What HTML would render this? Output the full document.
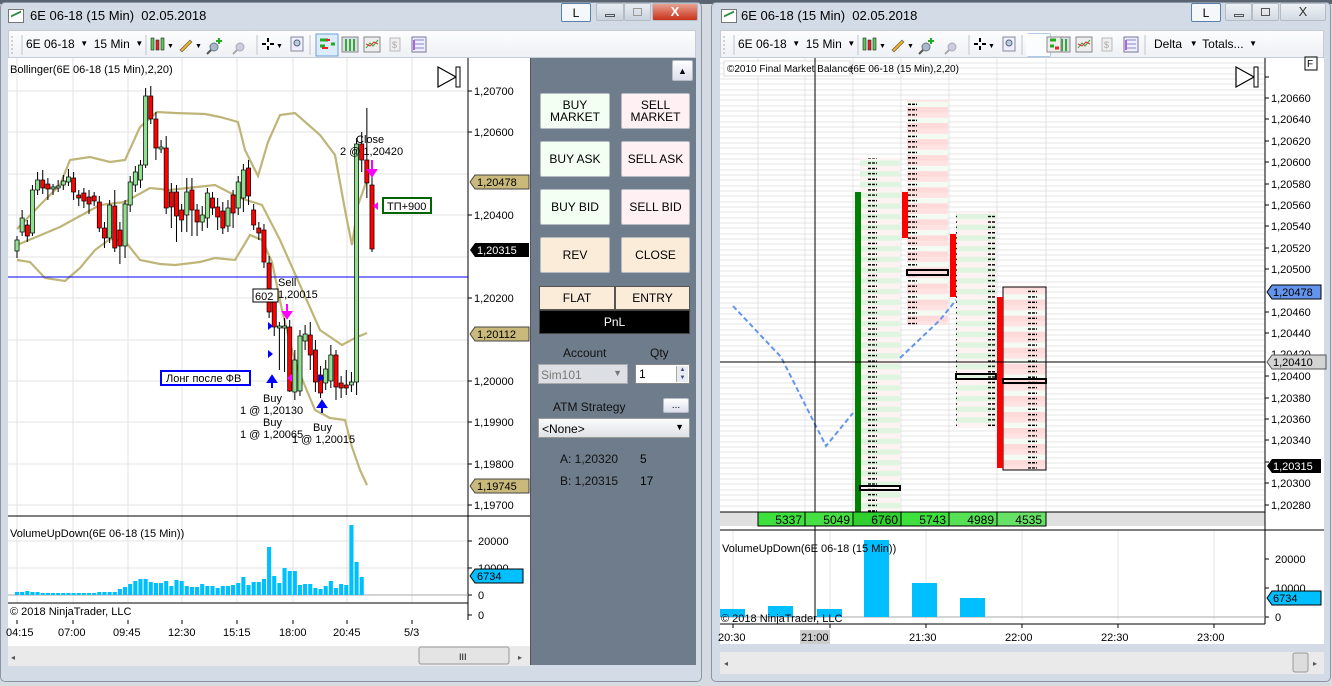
<!DOCTYPE html>
<html><head><meta charset="utf-8"><style>
*{margin:0;padding:0;box-sizing:border-box}
body{width:1332px;height:686px;overflow:hidden;background:#d6dbe2;font-family:"Liberation Sans",sans-serif;font-size:12px;position:relative}
.a{position:absolute}
.win{position:absolute;background:#d3dce6;border:1px solid #8a96a4;border-radius:5px}
.title{position:absolute;font-size:13px;color:#000}
.btn{position:absolute;border:1px solid #b6bcc4;border-radius:2px;text-align:center;font-size:12px;color:#000;display:flex;align-items:center;justify-content:center;line-height:12px}
.g{background:#f2fff2}.p{background:#fff0f3}.o{background:#fbebd9}
.lbl{font-size:11px;fill:#000}
.ar{font-size:8px;vertical-align:2px}
</style></head><body>
<div class="a" style="left:0;top:0;width:1332px;height:4px;background:#5a6470"></div>

<!-- LEFT WINDOW -->
<div class="win" style="left:0;top:2px;width:702px;height:680px"></div>
<div class="a" style="left:8px;top:9px;width:16px;height:14px;border:1px solid #777;background:#fff"><div style="margin:3px 2px;height:6px;border-top:2px solid #2a8a3a;transform:skewY(-25deg)"></div></div>
<div class="title" style="left:30px;top:8px">6E 06-18 (15 Min)&nbsp; 02.05.2018</div>
<div class="btn" style="left:561px;top:3px;width:30px;height:19px;background:#f5f8fb;border-color:#5a7fa8">L</div>
<div class="btn" style="left:596px;top:3px;width:28px;height:18px;background:linear-gradient(#e8edf3,#c9d3de)"><div style="width:10px;height:3px;border:1px solid #555;margin-top:6px"></div></div>
<div class="btn" style="left:624px;top:3px;width:27px;height:18px;background:linear-gradient(#e8edf3,#c9d3de)"><div style="width:9px;height:8px;border:1px solid #999"></div></div>
<div class="btn" style="left:652px;top:3px;width:46px;height:18px;background:linear-gradient(#e8a090,#c8311b);color:#fff;font-weight:bold;font-size:13px">X</div>
<div class="a" style="left:8px;top:30px;width:688px;height:28px;background:linear-gradient(#fdfdfe,#eef1f5);border:1px solid #c5ccd5"></div>
<div class="a" style="left:26px;top:37px;font-size:12px">6E 06-18 <span class="ar">&nbsp;▼&nbsp;</span> 15 Min <span class="ar">&nbsp;▼</span></div>

<div class="a" style="left:530px;top:58px;width:166px;height:607px;background:#6f7c8b;border-left:1px solid #555"></div>
<div class="btn" style="left:672px;top:60px;width:21px;height:21px;background:linear-gradient(#fff,#dde);font-size:9px">▲</div>
<div class="btn g" style="left:540px;top:93px;width:70px;height:36px">BUY<br>MARKET</div>
<div class="btn p" style="left:621px;top:93px;width:69px;height:36px">SELL<br>MARKET</div>
<div class="btn g" style="left:540px;top:141px;width:70px;height:36px">BUY ASK</div>
<div class="btn p" style="left:621px;top:141px;width:69px;height:36px">SELL ASK</div>
<div class="btn g" style="left:540px;top:189px;width:70px;height:36px">BUY BID</div>
<div class="btn p" style="left:621px;top:189px;width:69px;height:36px">SELL BID</div>
<div class="btn o" style="left:540px;top:237px;width:70px;height:36px">REV</div>
<div class="btn o" style="left:621px;top:237px;width:69px;height:36px">CLOSE</div>
<div class="btn o" style="left:539px;top:286px;width:76px;height:24px;border-color:#555;border-radius:0">FLAT</div>
<div class="btn o" style="left:615px;top:286px;width:75px;height:24px;border-color:#555;border-radius:0">ENTRY</div>
<div class="btn" style="left:539px;top:310px;width:151px;height:24px;background:#000;color:#fff;border-color:#444;border-radius:0">PnL</div>
<div class="a" style="left:563px;top:346px;color:#111">Account</div>
<div class="a" style="left:650px;top:346px;color:#111">Qty</div>
<div class="a" style="left:538px;top:364px;width:90px;height:20px;background:#dcdfe3;border:1px solid #aaa;color:#777;padding:3px 2px;font-size:12px">Sim101<span style="position:absolute;right:5px;top:3px;font-size:9px">▼</span></div>
<div class="a" style="left:635px;top:364px;width:55px;height:20px;background:#fff;border:1px solid #888;padding:2px 3px">1<div style="position:absolute;right:1px;top:1px;width:12px;height:16px;background:#e8ecf1;border-left:1px solid #aaa;font-size:6px;line-height:8px;text-align:center;color:#447">▲<br>▼</div></div>
<div class="a" style="left:553px;top:400px;color:#111">ATM Strategy</div>
<div class="btn" style="left:663px;top:398px;width:26px;height:15px;background:linear-gradient(#fff,#dde);font-size:10px">...</div>
<div class="a" style="left:538px;top:418px;width:152px;height:20px;background:linear-gradient(#fbfbfb,#dfe2e6);border:1px solid #999;padding:3px 3px">&lt;None&gt;<span style="position:absolute;right:5px;top:3px;font-size:9px">▼</span></div>
<div class="a" style="left:560px;top:452px;color:#111">A: 1,20320</div><div class="a" style="left:640px;top:452px">5</div>
<div class="a" style="left:560px;top:474px;color:#111">B: 1,20315</div><div class="a" style="left:640px;top:474px">17</div>

<!-- RIGHT WINDOW -->
<div class="win" style="left:711px;top:2px;width:620px;height:680px"></div>
<div class="a" style="left:721px;top:9px;width:16px;height:14px;border:1px solid #777;background:#fff"><div style="margin:3px 2px;height:6px;border-top:2px solid #2a8a3a;transform:skewY(-25deg)"></div></div>
<div class="title" style="left:741px;top:8px">6E 06-18 (15 Min)&nbsp; 02.05.2018</div>
<div class="btn" style="left:1191px;top:3px;width:30px;height:19px;background:#f5f8fb;border-color:#5a7fa8">L</div>
<div class="btn" style="left:1225px;top:3px;width:27px;height:18px;background:linear-gradient(#eef2f6,#d2dae3)"><div style="width:10px;height:3px;border:1px solid #555;margin-top:6px"></div></div>
<div class="btn" style="left:1252px;top:3px;width:27px;height:18px;background:linear-gradient(#eef2f6,#d2dae3)"><div style="width:9px;height:8px;border:1px solid #555"></div></div>
<div class="btn" style="left:1280px;top:3px;width:46px;height:18px;background:linear-gradient(#eef2f6,#d2dae3);color:#333;font-size:13px">X</div>
<div class="a" style="left:720px;top:30px;width:604px;height:28px;background:linear-gradient(#fdfdfe,#eef1f5);border:1px solid #c5ccd5"></div>
<div class="a" style="left:738px;top:37px;font-size:12px">6E 06-18 <span class="ar">&nbsp;▼&nbsp;</span> 15 Min <span class="ar">&nbsp;▼</span></div>
<div class="a" style="left:1154px;top:37px;font-size:12px">Delta <span class="ar">&nbsp; ▼ &nbsp;</span>Totals... <span class="ar">&nbsp;▼</span></div>

<svg class="a" style="left:0;top:0" width="1332" height="686" xmlns="http://www.w3.org/2000/svg" font-family="Liberation Sans, sans-serif">
<g id="tbi">
<path d="M12 36v18" stroke="#aaa" stroke-dasharray="2 2"/>
<path d="M22 35v20M146 35v20M257 35v20M310 35v20" stroke="#c0c6ce"/>
<rect x="151" y="38" width="3" height="12" fill="#58c958" stroke="#222" stroke-width=".6"/><rect x="156" y="40" width="3" height="10" fill="#e22" stroke="#222" stroke-width=".6"/><rect x="161" y="38" width="3" height="12" fill="#58c958" stroke="#222" stroke-width=".6"/>
<text x="167" y="48" font-size="7">▼</text>
<path d="M180 50l10-10 2 2-10 10z" fill="#f0b020" stroke="#555" stroke-width=".6"/><text x="195" y="48" font-size="7">▼</text>
<circle cx="214" cy="47" r="4" fill="#a9b9c9" stroke="#678"/><path d="M211 50l-4 4" stroke="#555" stroke-width="2"/><path d="M219 38v6M216 41h6" stroke="#2a2" stroke-width="2"/>
<circle cx="240" cy="47" r="4" fill="#ccd" stroke="#aab"/><path d="M237 50l-4 4" stroke="#aaa" stroke-width="2"/>
<path d="M268 38v4M268 46v4M262 44h4M270 44h4" stroke="#000" stroke-width="2"/><text x="276" y="48" font-size="7">▼</text>
<rect x="291" y="37" width="12" height="14" fill="#eef" stroke="#889"/><circle cx="297" cy="43" r="3" fill="#bcd" stroke="#567"/>
<rect x="316" y="34" width="22" height="22" fill="#dcecfb" stroke="#6aa0d8"/><path d="M320 40h8M320 46h5M331 44h4" stroke="#2a2" stroke-width="3"/><path d="M326 40h4M322 48h6" stroke="#e22" stroke-width="2"/>
<rect x="342" y="37" width="16" height="15" fill="#dde" stroke="#888"/><path d="M346 39v12M350 39v12M354 39v12" stroke="#3a3" stroke-width="2"/>
<rect x="364" y="37" width="16" height="15" fill="#eee" stroke="#888"/><path d="M366 48l4-5 3 3 5-6" stroke="#3a3" fill="none"/><path d="M366 44l4 2 4-4 4 2" stroke="#d33" fill="none"/>
<rect x="390" y="38" width="10" height="13" fill="#eee" stroke="#bbb"/><text x="392" y="48" font-size="9" fill="#aaa">$</text>
<rect x="412" y="37" width="14" height="15" fill="#eef" stroke="#779"/><path d="M414 40h10M414 44h10M414 48h10" stroke="#88b"/><path d="M414 40v10" stroke="#a6d" stroke-width="2"/>
</g>
<use href="#tbi" transform="translate(712 0)"/>
<rect x="1026" y="34" width="24" height="22" fill="#fafcfd"/>
<path d="M1047 37h14v15h-14z" fill="#eee" stroke="#888"/><path d="M1050 40h6M1050 46h4" stroke="#2a2" stroke-width="3"/><path d="M1055 48h4" stroke="#e22" stroke-width="3"/>
<path d="M1145 35v20" stroke="#c0c6ce"/>

<!-- LEFT CHART -->
<rect x="8" y="58" width="522" height="608" fill="#fff"/>
<g stroke="#e3e3e3">
<path d="M17 58V603M73 58V603M128 58V603M182 58V603M237 58V603M293 58V603M347 58V603M412 58V603"/>
<path d="M8 91H468M8 132H468M8 174H468M8 215H468M8 257H468M8 298H468M8 340H468M8 381H468M8 422H468M8 464H468M8 505H468"/>
<path d="M8 541H468M8 568H468"/>
</g>
<text x="10" y="73" font-size="11">Bollinger(6E 06-18 (15 Min),2,20)</text>
<path d="M438 67l18 10-18 10z" fill="#fff" stroke="#000" stroke-width="1.2"/><rect x="456" y="67" width="4" height="20" fill="#fff" stroke="#000"/>
<g fill="none" stroke="#bfb578" stroke-width="2.2">
<polyline points="17,229 40,205 60,185 70,160 90,157 110,162 125,160 140,127 157,112 175,113 205,114 220,117 238,122 245,150 258,176 268,142 280,115 295,113 320,135 335,155 345,210 352,245 358,205 367,180"/>
<polyline points="17,245 60,227 100,205 125,202 150,188 170,190 215,185 240,198 262,205 280,240 300,285 320,330 342,345 355,338 367,333"/>
<polyline points="17,260 30,262 45,278 65,281 80,268 95,250 110,239 125,241 140,260 160,264 175,265 200,262 215,258 235,260 250,235 262,240 272,262 282,310 295,362 315,410 330,418 345,420 352,447 360,470 367,485"/>
</g>
<path d="M8 277H468" stroke="#0000ff" stroke-width="1"/>
<g transform="translate(17 0) scale(1.029 1) translate(-17 0)">
<g stroke="#000" stroke-width="1">
<path d="M17 236V258M22 210V236M27 220V242M32 185V236M37 172V195M42 170V194M47 178V200M52 184V195M57 180V192M62 175V190M67 169V186M72 172V200M77 190V206M82 188V208M87 190V214M92 192V206M97 196V232M102 222V248M107 200V243M112 190V252M117 222V264M122 200V258M127 176V212M132 166V192M137 160V188M142 88V168M147 86V124M152 112V160M157 140V153M162 136V214M167 183V228M172 185V242M177 204V232M182 178V232M187 178V236M192 204V236M197 206V231M202 188V228M207 192V215M212 198V230M217 202V234M222 200V232M227 190V228M232 176V215M237 164V212M242 160V205M247 204V230M252 222V240M257 224V268M262 256V318M267 295V336M272 322V370M277 318V372M282 320V392M287 350V400M292 330V396M297 325V350M302 322V370M307 340V392M312 366V398M317 360V390M322 345V388M327 350V400M332 376V398M337 370V395M342 372V392M347 138V395M352 132V172M357 108V198M362 176V252"/>
</g>
<g stroke="#000" stroke-width=".7">
<rect x="15" y="240" width="4" height="11" fill="#90e090"/><rect x="20" y="218" width="4" height="14" fill="#90e090"/><rect x="25" y="225" width="4" height="11" fill="#f00"/><rect x="30" y="190" width="4" height="43" fill="#90e090"/><rect x="35" y="180" width="4" height="10" fill="#90e090"/><rect x="40" y="180" width="4" height="8" fill="#f00"/><rect x="45" y="184" width="4" height="5" fill="#f00"/><rect x="50" y="187" width="4" height="2" fill="#90e090"/><rect x="55" y="186" width="4" height="2" fill="#90e090"/><rect x="60" y="181" width="4" height="4" fill="#90e090"/><rect x="65" y="177" width="4" height="5" fill="#90e090"/><rect x="70" y="178" width="4" height="14" fill="#f00"/><rect x="75" y="195" width="4" height="3" fill="#f00"/><rect x="80" y="193" width="4" height="8" fill="#f00"/><rect x="85" y="197" width="4" height="7" fill="#f00"/><rect x="90" y="196" width="4" height="5" fill="#f00"/><rect x="95" y="202" width="4" height="26" fill="#f00"/><rect x="100" y="228" width="4" height="10" fill="#f00"/><rect x="105" y="205" width="4" height="33" fill="#90e090"/><rect x="110" y="206" width="4" height="42" fill="#f00"/><rect x="115" y="230" width="4" height="16" fill="#f00"/><rect x="120" y="204" width="4" height="42" fill="#90e090"/><rect x="125" y="182" width="4" height="23" fill="#90e090"/><rect x="130" y="172" width="4" height="13" fill="#90e090"/><rect x="135" y="165" width="4" height="15" fill="#90e090"/><rect x="140" y="96" width="4" height="69" fill="#90e090"/><rect x="145" y="96" width="4" height="23" fill="#f00"/><rect x="150" y="119" width="4" height="29" fill="#f00"/><rect x="155" y="147" width="4" height="2" fill="#90e090"/><rect x="160" y="148" width="4" height="60" fill="#f00"/><rect x="165" y="192" width="4" height="15" fill="#f00"/><rect x="170" y="192" width="4" height="24" fill="#f00"/><rect x="175" y="210" width="4" height="10" fill="#f00"/><rect x="180" y="192" width="4" height="23" fill="#90e090"/><rect x="185" y="190" width="4" height="20" fill="#f00"/><rect x="190" y="210" width="4" height="12" fill="#f00"/><rect x="195" y="215" width="4" height="7" fill="#90e090"/><rect x="200" y="193" width="4" height="25" fill="#90e090"/><rect x="205" y="198" width="4" height="10" fill="#f00"/><rect x="210" y="207" width="4" height="10" fill="#f00"/><rect x="215" y="211" width="4" height="17" fill="#f00"/><rect x="220" y="208" width="4" height="18" fill="#90e090"/><rect x="225" y="195" width="4" height="18" fill="#f00"/><rect x="230" y="182" width="4" height="26" fill="#90e090"/><rect x="235" y="170" width="4" height="28" fill="#90e090"/><rect x="240" y="168" width="4" height="28" fill="#f00"/><rect x="245" y="210" width="4" height="15" fill="#f00"/><rect x="250" y="228" width="4" height="5" fill="#f00"/><rect x="255" y="230" width="4" height="32" fill="#f00"/><rect x="260" y="263" width="4" height="49" fill="#f00"/><rect x="265" y="300" width="4" height="27" fill="#f00"/><rect x="270" y="326" width="4" height="2" fill="#90e090"/><rect x="275" y="326" width="4" height="2" fill="#90e090"/><rect x="280" y="327" width="4" height="64" fill="#f00"/><rect x="285" y="360" width="4" height="32" fill="#90e090"/><rect x="290" y="336" width="4" height="55" fill="#90e090"/><rect x="295" y="334" width="4" height="7" fill="#90e090"/><rect x="300" y="335" width="4" height="20" fill="#f00"/><rect x="305" y="350" width="4" height="32" fill="#f00"/><rect x="310" y="375" width="4" height="18" fill="#f00"/><rect x="315" y="369" width="4" height="14" fill="#90e090"/><rect x="320" y="355" width="4" height="26" fill="#90e090"/><rect x="325" y="355" width="4" height="32" fill="#f00"/><rect x="330" y="383" width="4" height="5" fill="#f00"/><rect x="335" y="385" width="4" height="3" fill="#f00"/><rect x="340" y="382" width="4" height="3" fill="#90e090"/><rect x="345" y="144" width="4" height="238" fill="#90e090"/><rect x="350" y="144" width="4" height="16" fill="#f00"/><rect x="355" y="160" width="4" height="23" fill="#f00"/><rect x="360" y="185" width="4" height="64" fill="#f00"/>
</g>
</g>
<g font-size="11" fill="#000">
<text x="356" y="143">Close</text><text x="340" y="155">2 @ 1,20420</text>
<text x="278" y="286">Sell</text><text x="278" y="298">1,20015</text>
<rect x="253" y="289" width="25" height="13" fill="#fff" stroke="#000"/><text x="255" y="300">602</text>
<text x="263" y="402">Buy</text><text x="240" y="414">1 @ 1,20130</text>
<text x="263" y="426">Buy</text><text x="240" y="438">1 @ 1,20065</text>
<text x="313" y="431">Buy</text><text x="292" y="443">1 @ 1,20015</text>
</g>
<path d="M372 160v14M368 170l4 6 4-6z" stroke="#f0f" fill="#f0f" stroke-width="2"/>
<path d="M287 304v12M283 312l4 6 4-6z" stroke="#f0f" fill="#f0f" stroke-width="2"/>
<path d="M272 388v-10M268 382l4-6 4 6z" stroke="#00f" fill="#00f" stroke-width="2"/>
<path d="M322 413v-10M318 407l4-6 4 6z" stroke="#00f" fill="#00f" stroke-width="2"/>
<path d="M268 322l5 4-5 4zM268 350l5 4-5 4zM319 374l5 4-5 4z" fill="#00f"/>
<path d="M378 202l-5 4 5 4zM292 374l-5 4 5 4z" fill="#f0f"/>
<rect x="383" y="198" width="48" height="15" fill="#fff" stroke="#060" stroke-width="2"/><text x="387" y="210" font-size="11">ТП+900</text>
<rect x="161" y="371" width="89" height="14" fill="#fff" stroke="#00f" stroke-width="2"/><text x="166" y="382" font-size="11">Лонг после ФВ</text>
<path d="M468 58V620M8 516H530M8 603H468" stroke="#000"/>
<g class="lbl" font-size="11">
<path d="M468 91h4M468 132h4M468 215h4M468 298h4M468 381h4M468 422h4M468 464h4M468 505h4M468 541h4M468 568h4M468 595h4M468 615h4" stroke="#000"/>
<text x="474" y="95">1,20700</text><text x="474" y="136">1,20600</text><text x="474" y="219">1,20400</text><text x="474" y="302">1,20200</text><text x="474" y="385">1,20000</text><text x="474" y="426">1,19900</text><text x="474" y="468">1,19800</text><text x="474" y="509">1,19700</text>
<text x="478" y="545">20000</text><text x="478" y="572">10000</text><text x="478" y="599">0</text><text x="478" y="619">0</text>
</g>
<path d="M470 182l5-7h54v14h-54z" fill="#c9b97a" stroke="#444"/><text x="477" y="186" font-size="11">1,20478</text>
<path d="M470 250l5-7h54v14h-54z" fill="#000"/><text x="477" y="254" font-size="11" fill="#fff">1,20315</text>
<path d="M470 334l5-7h54v14h-54z" fill="#c9b97a" stroke="#444"/><text x="477" y="338" font-size="11">1,20112</text>
<path d="M470 486l5-7h54v14h-54z" fill="#c9b97a" stroke="#444"/><text x="477" y="490" font-size="11">1,19745</text>
<text x="10" y="537" font-size="11">VolumeUpDown(6E 06-18 (15 Min))</text>
<path d="M8 595H468" stroke="#aaa"/>
<path transform="translate(17 0) scale(1.029 1) translate(-17 0)" stroke="#00bfff" stroke-width="4" d="M17 595v-3M22 595v-3M27 595v-4M32 595v-3M37 595v-3M42 595v-2M47 595v-2M52 595v-2M57 595v-2M62 595v-2M67 595v-2M72 595v-2M77 595v-2M82 595v-2M87 595v-2M92 595v-2M97 595v-3M102 595v-3M107 595v-3M112 595v-3M117 595v-6M122 595v-8M127 595v-11M132 595v-14M137 595v-16M142 595v-16M147 595v-13M152 595v-12M157 595v-12M162 595v-14M167 595v-9M172 595v-15M177 595v-14M182 595v-9M187 595v-8M192 595v-8M197 595v-11M202 595v-9M207 595v-9M212 595v-7M217 595v-9M222 595v-9M227 595v-10M232 595v-12M237 595v-18M242 595v-10M247 595v-13M252 595v-13M257 595v-16M262 595v-48M267 595v-19M272 595v-12M277 595v-27M282 595v-24M287 595v-24M292 595v-10M297 595v-11M302 595v-11M307 595v-7M312 595v-6M317 595v-9M322 595v-14M327 595v-7M332 595v-11M337 595v-10M342 595v-70M347 595v-33M352 595v-18"/>
<path d="M470 576l5-7h48v14h-48z" fill="#00bfff" stroke="#000"/><text x="477" y="580" font-size="11">6734</text>
<text x="10" y="615" font-size="11">© 2018 NinjaTrader, LLC</text>
<g font-size="11"><path d="M17 620v4M73 620v4M128 620v4M182 620v4M237 620v4M293 620v4M347 620v4M412 620v4" stroke="#000"/>
<text x="6" y="636">04:15</text><text x="58" y="636">07:00</text><text x="113" y="636">09:45</text><text x="168" y="636">12:30</text><text x="223" y="636">15:15</text><text x="279" y="636">18:00</text><text x="333" y="636">20:45</text><text x="404" y="636">5/3</text></g>
<rect x="8" y="646" width="522" height="20" fill="#eaeaea"/>
<rect x="419" y="647" width="90" height="17" rx="2" fill="#e4e4e4" stroke="#999"/><text x="459" y="660" font-size="9">III</text>
<text x="11" y="660" font-size="8" fill="#555">◂</text><text x="518" y="660" font-size="8" fill="#555">▸</text>

<!-- RIGHT CHART -->
<rect x="720" y="58" width="604" height="586" fill="#fff"/>
<g stroke="#e4e4e4">
<path d="M720 63H1265M720 68H1265M720 74H1265M720 79H1265M720 84H1265M720 90H1265M720 95H1265M720 100H1265M720 106H1265M720 111H1265M720 116H1265M720 122H1265M720 127H1265M720 132H1265M720 138H1265M720 143H1265M720 148H1265M720 154H1265M720 159H1265M720 164H1265M720 170H1265M720 175H1265M720 180H1265M720 186H1265M720 191H1265M720 196H1265M720 202H1265M720 207H1265M720 212H1265M720 218H1265M720 223H1265M720 228H1265M720 234H1265M720 239H1265M720 244H1265M720 250H1265M720 255H1265M720 260H1265M720 266H1265M720 271H1265M720 276H1265M720 282H1265M720 287H1265M720 292H1265M720 298H1265M720 303H1265M720 308H1265M720 314H1265M720 319H1265M720 324H1265M720 330H1265M720 335H1265M720 340H1265M720 346H1265M720 351H1265M720 356H1265M720 362H1265M720 367H1265M720 372H1265M720 378H1265M720 383H1265M720 388H1265M720 394H1265M720 399H1265M720 404H1265M720 410H1265M720 415H1265M720 420H1265M720 426H1265M720 431H1265M720 436H1265M720 442H1265M720 447H1265M720 452H1265M720 458H1265M720 463H1265M720 468H1265M720 474H1265M720 479H1265M720 484H1265M720 490H1265M720 495H1265M720 500H1265M720 506H1265"/>
<path d="M758 58V512M805 58V512M853 58V512M901 58V512M949 58V512M997 58V512M1046 58V512"/>
<path d="M733 530V620M830 530V620M926 530V620M1022 530V620M1118 530V620M1214 530V620"/>
</g>
<rect x="724" y="61" width="126" height="15" fill="#fff" stroke="#ddd"/>
<text x="727" y="72" font-size="10">©2010 Final Market Balance</text><text x="850" y="72" font-size="10">(6E 06-18 (15 Min),2,20)</text>
<path d="M1236 67l18 10-18 10z" fill="#fff" stroke="#000" stroke-width="1.2"/><rect x="1254" y="67" width="4" height="20" fill="#fff" stroke="#000"/>
<rect x="1305" y="57" width="12" height="13" fill="#fff" stroke="#000"/><text x="1307" y="67" font-size="10">F</text>
<defs>
<pattern id="fp1" width="40" height="10.7" patternUnits="userSpaceOnUse"><rect width="40" height="5.35" fill="#dff5df"/><rect y="5.35" width="40" height="5.35" fill="#fff2f2"/><path d="M28 2.5h9M28 8h9" stroke="#000" stroke-width="1.4" stroke-dasharray="3 1"/></pattern>
<pattern id="fp2" width="40" height="16.05" patternUnits="userSpaceOnUse"><rect width="40" height="5.35" fill="#ffe3e3"/><rect y="5.35" width="40" height="5.35" fill="#f3fbf3"/><rect y="10.7" width="40" height="5.35" fill="#ffdada"/><path d="M28 2.5h9M28 8h9M28 13.4h9" stroke="#000" stroke-width="1.4" stroke-dasharray="3 1"/></pattern>
</defs>
<rect x="860" y="158" width="40" height="354" fill="url(#fp1)"/>
<rect x="907" y="100" width="41" height="225" fill="url(#fp2)"/>
<rect x="956" y="212" width="40" height="216" fill="url(#fp1)"/>
<rect x="1003" y="287" width="43" height="183" fill="url(#fp2)" stroke="#000"/>
<rect x="855" y="192" width="6" height="320" fill="#008000"/>
<rect x="902" y="192" width="6" height="46" fill="#f00"/>
<rect x="950" y="234" width="6" height="63" fill="#f00"/>
<rect x="997" y="297" width="6" height="171" fill="#f00"/>
<rect x="860" y="486" width="40" height="4" fill="none" stroke="#000" stroke-width="2"/>
<rect x="907" y="270" width="41" height="5" fill="none" stroke="#000" stroke-width="2"/>
<rect x="956" y="374" width="40" height="5" fill="none" stroke="#000" stroke-width="2"/>
<rect x="1003" y="379" width="43" height="4" fill="none" stroke="#000" stroke-width="2"/>
<polyline points="733,306 781,357 826,446 853,413" fill="none" stroke="#6495ed" stroke-width="2" stroke-dasharray="5 3"/>
<polyline points="900,358 940,320 956,300" fill="none" stroke="#6495ed" stroke-width="2" stroke-dasharray="5 3"/>
<path d="M815 58V620M720 362H1265" stroke="#000"/>
<rect x="720" y="512" width="545" height="14" fill="#e0e0e0"/>
<g stroke="#000"><rect x="758" y="512" width="47" height="14" fill="#3ee03e"/><rect x="805" y="512" width="48" height="14" fill="#44e044"/><rect x="853" y="512" width="48" height="14" fill="#30cf30"/><rect x="901" y="512" width="48" height="14" fill="#3ee03e"/><rect x="949" y="512" width="48" height="14" fill="#55e055"/><rect x="997" y="512" width="49" height="14" fill="#66e066"/></g>
<path d="M720 512H1265" stroke="#000"/>
<g font-size="12" text-anchor="end"><text x="802" y="524">5337</text><text x="850" y="524">5049</text><text x="898" y="524">6760</text><text x="946" y="524">5743</text><text x="994" y="524">4989</text><text x="1042" y="524">4535</text></g>
<path d="M720 530H1324M1265 58V624M720 624H1265" stroke="#000"/>
<g font-size="11">
<path d="M1265 77h4M1265 98h4M1265 119h4M1265 141h4M1265 162h4M1265 184h4M1265 205h4M1265 226h4M1265 248h4M1265 269h4M1265 312h4M1265 333h4M1265 376h4M1265 398h4M1265 419h4M1265 440h4M1265 462h4M1265 483h4M1265 505h4" stroke="#000"/>
<text x="1271" y="102">1,20660</text><text x="1271" y="123">1,20640</text><text x="1271" y="145">1,20620</text><text x="1271" y="166">1,20600</text><text x="1271" y="188">1,20580</text><text x="1271" y="209">1,20560</text><text x="1271" y="230">1,20540</text><text x="1271" y="252">1,20520</text><text x="1271" y="273">1,20500</text><text x="1271" y="316">1,20460</text><text x="1271" y="337">1,20440</text><text x="1271" y="358">1,20420</text><text x="1271" y="380">1,20400</text><text x="1271" y="402">1,20380</text><text x="1271" y="423">1,20360</text><text x="1271" y="444">1,20340</text><text x="1271" y="487">1,20300</text><text x="1271" y="509">1,20280</text>
</g>
<path d="M1267 292l5-7h49v14h-49z" fill="#6495ed" stroke="#000"/><text x="1273" y="296" font-size="11">1,20478</text>
<path d="M1267 362l5-7h54v14h-54z" fill="#d3d3d3" stroke="#555"/><text x="1273" y="366" font-size="11">1,20410</text>
<path d="M1267 466l5-7h49v14h-49z" fill="#000"/><text x="1273" y="470" font-size="11" fill="#fff">1,20315</text>
<path d="M720 617H1265" stroke="#aaa"/>
<g fill="#00bfff"><rect x="720" y="609" width="25" height="8"/><rect x="768" y="606" width="25" height="11"/><rect x="817" y="609" width="25" height="8"/><rect x="864" y="540" width="25" height="77"/><rect x="912" y="583" width="25" height="34"/><rect x="960" y="598" width="25" height="19"/></g>
<text x="722" y="552" font-size="11">VolumeUpDown(6E 06-18 (15 Min))</text>
<text x="721" y="622" font-size="11">© 2018 NinjaTrader, LLC</text>
<g font-size="11"><path d="M1265 559h4M1265 588h4M1265 617h4" stroke="#000"/><text x="1275" y="563">20000</text><text x="1275" y="592">10000</text><text x="1275" y="621">0</text></g>
<path d="M1267 598l5-7h49v14h-49z" fill="#00bfff" stroke="#000"/><text x="1273" y="602" font-size="11">6734</text>
<g font-size="11"><path d="M733 624v4M830 624v4M926 624v4M1022 624v4M1118 624v4M1214 624v4" stroke="#000"/>
<rect x="800" y="630" width="30" height="14" fill="#ccc"/>
<text x="718" y="641">20:30</text><text x="801" y="641">21:00</text><text x="909" y="641">21:30</text><text x="1005" y="641">22:00</text><text x="1101" y="641">22:30</text><text x="1197" y="641">23:00</text></g>
<rect x="720" y="652" width="604" height="22" fill="#eaeaea"/>
<rect x="1293" y="653" width="15" height="19" rx="2" fill="#ddd" stroke="#999"/>
<text x="724" y="666" font-size="8" fill="#555">◂</text><text x="1313" y="666" font-size="8" fill="#555">▸</text>
</svg>
</body></html>
